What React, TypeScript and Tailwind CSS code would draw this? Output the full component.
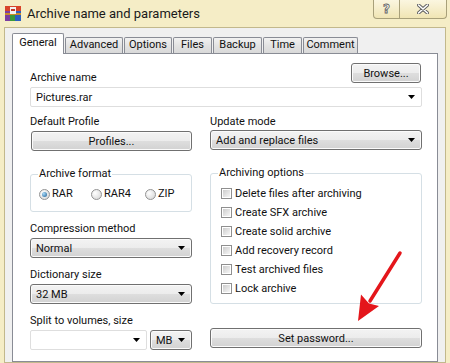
import React from 'react';

const btn =
  'border border-[#707070] rounded-[3px] bg-[linear-gradient(to_bottom,#f3f3f3_0%,#ececec_50%,#dedede_50%,#d2d2d2_100%)] shadow-[inset_0_0_0_1px_#fbfbfb]';

function Arrow() {
  return (
    <svg width="7" height="4" viewBox="0 0 7 4" className="shrink-0">
      <path d="M0 0h7L3.5 4z" fill="#000" />
    </svg>
  );
}

function Button({ label, className = '' }: { label: string; className?: string }) {
  return (
    <div className={`${btn} h-[20px] flex items-center justify-center leading-none ${className}`}>
      {label}
    </div>
  );
}

function Combo({ value, editable, className = '' }: { value: string; editable?: boolean; className?: string }) {
  return (
    <div
      className={`h-[20px] flex items-center pl-[5px] pr-[6px] ${
        editable ? 'bg-white border border-[#dedede] rounded-[2px]' : btn
      } ${className}`}
    >
      <span className="flex-1 truncate leading-none">{value}</span>
      <Arrow />
    </div>
  );
}

function Label({ children, className = '' }: { children: React.ReactNode; className?: string }) {
  return <div className={`leading-[14px] h-[14px] ${className}`}>{children}</div>;
}

function Radio({ label, checked, className = '' }: { label: string; checked?: boolean; className?: string }) {
  return (
    <div className={`flex items-center gap-[2px] ${className}`}>
      <span className="w-[11px] h-[11px] rounded-full border border-[#939393] bg-[radial-gradient(circle_at_35%_35%,#ffffff,#d2d2d2)] flex items-center justify-center shrink-0">
        {checked && (
          <span className="w-[5px] h-[5px] rounded-full bg-[radial-gradient(circle_at_35%_35%,#a9dcfa,#1b5a90)]" />
        )}
      </span>
      <span className="leading-[14px]">{label}</span>
    </div>
  );
}

function Check({ label }: { label: string }) {
  return (
    <div className="h-[19px] flex items-center gap-[3px]">
      <span className="w-[11px] h-[11px] border border-[#8f8f8f] bg-white p-[1px] shrink-0">
        <span className="block w-full h-full bg-[linear-gradient(135deg,#cdcdcd,#f6f6f6)]" />
      </span>
      <span className="leading-[14px]">{label}</span>
    </div>
  );
}

function RarIcon() {
  return (
    <svg width="16" height="15" viewBox="0 0 16 15">
      <rect x="0" y="0" width="16" height="5" fill="#d8442a" />
      <rect x="0" y="5" width="5" height="10" fill="#7b3fa0" />
      <rect x="5" y="5" width="5" height="10" fill="#3a9a3a" />
      <rect x="10" y="5" width="6" height="10" fill="#2b5fc0" />
      <rect x="0" y="7" width="16" height="2" fill="#c98a2a" />
      <rect x="5" y="1" width="6" height="7" fill="#f2f2f2" />
      <rect x="6" y="3" width="4" height="2" fill="#c0392b" />
    </svg>
  );
}

function Tab({ label, active, w }: { label: string; active?: boolean; w: string }) {
  return active ? (
    <div
      className={`${w} h-[21px] -mb-px relative z-10 bg-white border border-b-0 border-[#898c95] rounded-t-[2px] flex items-center justify-center pb-[1px]`}
    >
      {label}
    </div>
  ) : (
    <div
      className={`${w} h-[16px] border border-b-0 border-[#898c95] rounded-t-[2px] bg-[linear-gradient(to_bottom,#f2f2f2,#e3e3e3_50%,#d9d9d9)] flex items-center justify-center`}
    >
      {label}
    </div>
  );
}

export default function App() {
  return (
    <div className="w-[450px] h-[363px] overflow-hidden relative bg-[#f5edc6] flex flex-col font-['Roboto',sans-serif] text-[11px] text-[#111]">
      {/* Title bar */}
      <div className="h-[27px] shrink-0 flex items-start">
        <div className="flex items-center gap-[6px] pl-[5px] pt-[6px]">
          <RarIcon />
          <span className="text-[13px] leading-[15px] text-[#1a1a1a]">Archive name and parameters</span>
        </div>
        <div className="ml-auto mr-[3px] flex">
          <div className="w-[27px] h-[19px] border border-t-0 border-[#a8a07a] rounded-bl-[4px] bg-[linear-gradient(to_bottom,#fbf6e0,#f0e5b4)] flex items-center justify-center">
            <span className="font-['DejaVu_Sans',sans-serif] font-bold text-[12px] leading-none text-white [-webkit-text-stroke:0.8px_#5e5e5e]">?</span>
          </div>
          <div className="w-[47px] h-[19px] border border-t-0 border-l-0 border-[#a8a07a] rounded-br-[4px] bg-[linear-gradient(to_bottom,#fbf6e0,#f0e5b4)] flex items-center justify-center">
            <svg width="12" height="10" viewBox="0 0 12 10">
              <path d="M1.5 1L10.5 9M10.5 1L1.5 9" stroke="#5e5e5e" strokeWidth="3.4" strokeLinecap="round" />
              <path d="M1.5 1L10.5 9M10.5 1L1.5 9" stroke="#fff" strokeWidth="1.6" strokeLinecap="round" />
            </svg>
          </div>
        </div>
      </div>

      {/* Client area */}
      <div className="flex-1 mx-[4px] border border-[#c2b88c] bg-[#f0f0f0] pl-[7px] pr-[7px] pt-[5px] flex flex-col">
        <div className="h-[20px] flex items-end gap-[1px]">
          <Tab label="General" active w="w-[52px]" />
          <Tab label="Advanced" w="w-[58px]" />
          <Tab label="Options" w="w-[48px]" />
          <Tab label="Files" w="w-[39px]" />
          <Tab label="Backup" w="w-[49px]" />
          <Tab label="Time" w="w-[39px]" />
          <Tab label="Comment" w="w-[55px]" />
        </div>

        <div className="flex-1 border border-[#898c95] bg-white pl-[17px] pr-[15px] pt-[9px]">
          <div className="flex items-start justify-between">
            <Label className="mt-[8px]">Archive name</Label>
            <Button label="Browse..." className="w-[70px] h-[19px] mr-[1px]" />
          </div>
          <Combo value="Pictures.rar" editable className="mt-[2px]" />

          <div className="mt-[8px] flex gap-[18px]">
            {/* Left column */}
            <div className="w-[162px] flex flex-col">
              <Label>Default Profile</Label>
              <Button label="Profiles..." className="mt-[2px] h-[19px] ml-[1px]" />

              <fieldset className="mt-[16px] h-[45px] border border-[#d5dfe5] rounded-[3px] px-[8px]">
                <legend className="ml-[-1px] px-[1px] leading-[14px]">Archive format</legend>
                <div className="mt-[6px] flex items-center">
                  <Radio label="RAR" checked className="w-[52px]" />
                  <Radio label="RAR4" className="w-[54px]" />
                  <Radio label="ZIP" />
                </div>
              </fieldset>

              <Label className="mt-[10px]">Compression method</Label>
              <Combo value="Normal" className="mt-[2px]" />

              <Label className="mt-[10px]">Dictionary size</Label>
              <Combo value="32 MB" className="mt-[2px]" />

              <Label className="mt-[10px]">Split to volumes, size</Label>
              <div className="mt-[2px] flex gap-[3px]">
                <Combo value="" editable className="w-[117px]" />
                <Combo value="MB" className="w-[42px]" />
              </div>
            </div>

            {/* Right column */}
            <div className="w-[212px] flex flex-col">
              <Label>Update mode</Label>
              <Combo value="Add and replace files" className="mt-[1px]" />

              <fieldset className="mt-[16px] h-[138px] border border-[#d5dfe5] rounded-[3px] px-[10px]">
                <legend className="ml-[-3px] px-[1px] leading-[14px]">Archiving options</legend>
                <div className="mt-[4px] flex flex-col">
                  <Check label="Delete files after archiving" />
                  <Check label="Create SFX archive" />
                  <Check label="Create solid archive" />
                  <Check label="Add recovery record" />
                  <Check label="Test archived files" />
                  <Check label="Lock archive" />
                </div>
              </fieldset>

              <Button label="Set password..." className="mt-[24px]" />
            </div>
          </div>
        </div>
      </div>

      {/* Red annotation arrow */}
      <svg
        className="absolute left-[350px] top-[245px] pointer-events-none"
        width="60"
        height="85"
        viewBox="0 0 60 85"
      >
        <path d="M50 8L20 56" stroke="#e4161b" strokeWidth="3.5" strokeLinecap="round" />
        <path d="M8 76L29 61L19 58.5L11 49.5Z" fill="#e4161b" />
      </svg>
    </div>
  );
}
